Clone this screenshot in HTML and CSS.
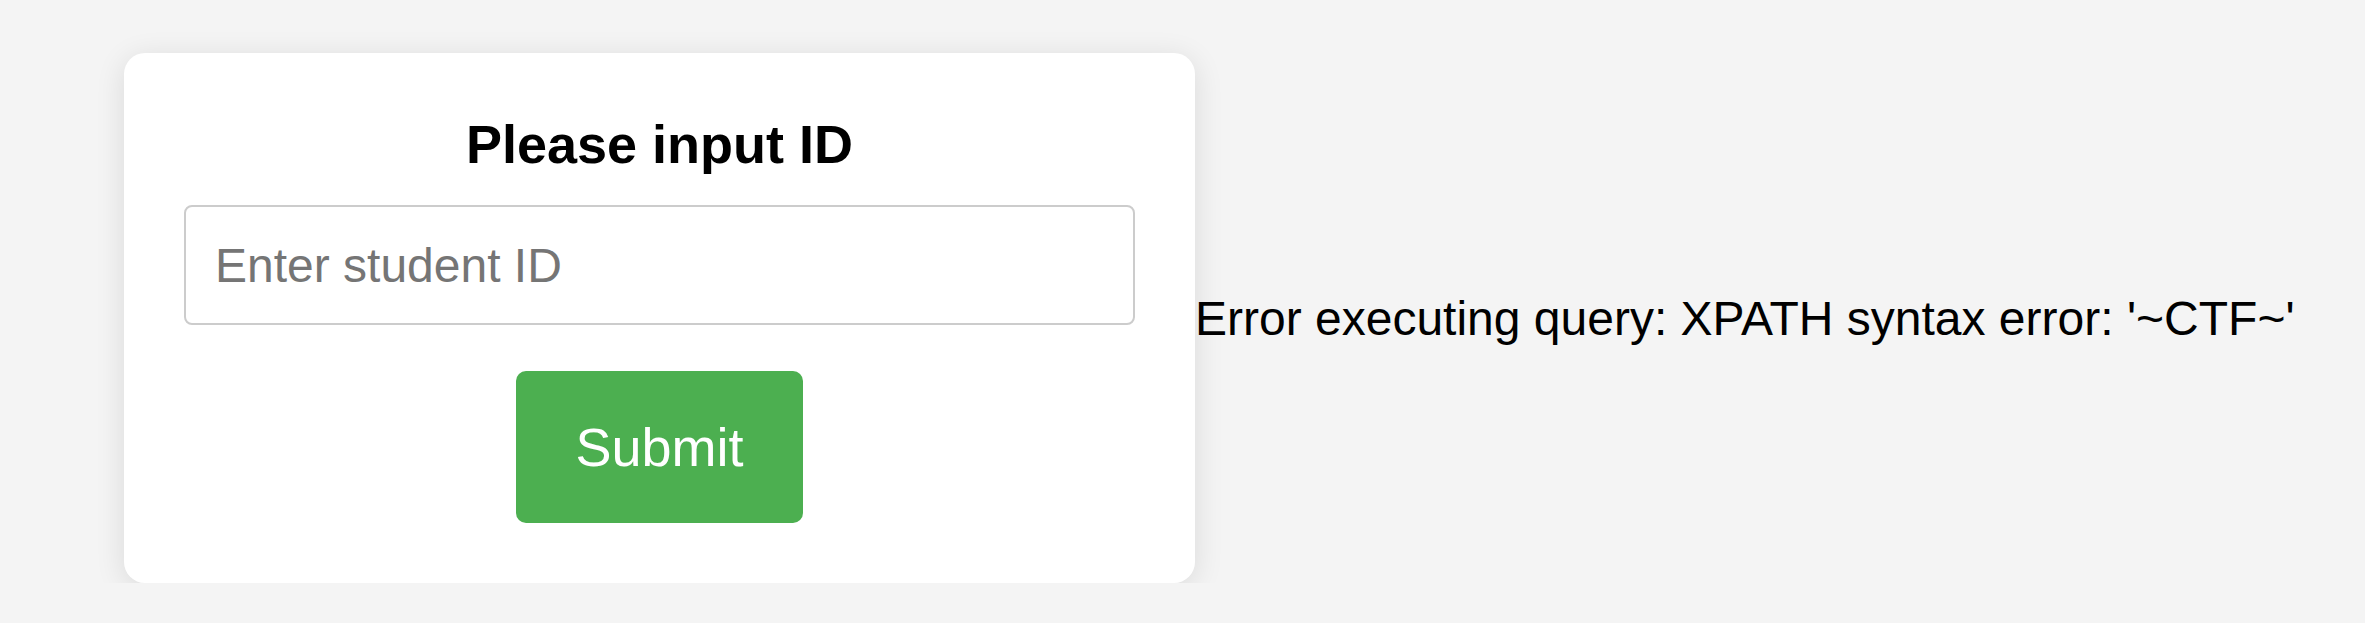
FILE: index.html
```html
<!DOCTYPE html>
<html lang="en">
<head>
<meta charset="utf-8">
<title>Please input ID</title>
<link rel="stylesheet" href="styles.css">
</head>
<body>
<div class="page">
  <form class="card" onsubmit="return false;">
    <h2 class="title">Please input ID</h2>
    <input class="field" type="text" placeholder="Enter student ID">
    <button class="submit" type="submit">Submit</button>
  </form>
  <div class="result">Error executing query: XPATH syntax error: '~CTF~'</div>
</div>
</body>
</html>
```

FILE: styles.css
```css
html, body {
  margin: 0;
  padding: 0;
  background: #f4f4f4;
  font-family: "Liberation Sans", Arial, sans-serif;
}

.page {
  display: flex;
  align-items: center;
  padding: 53px 0 0 124px;
}

.card {
  box-sizing: border-box;
  width: 1071px;
  padding: 60px;
  background: #ffffff;
  border-radius: 21px;
  box-shadow: 0 5px 30px rgba(0, 0, 0, 0.11);
  display: flex;
  flex-direction: column;
  align-items: center;
}

.title {
  margin: 0 0 30px 0;
  font-size: 54px;
  font-weight: bold;
  line-height: normal;
  color: #000;
}

.field {
  box-sizing: border-box;
  width: 100%;
  height: 120px;
  padding: 30px 29px;
  border: 2px solid #cccccc;
  border-radius: 8px;
  font-family: "Liberation Sans", Arial, sans-serif;
  font-size: 48px;
  color: #000;
  background: #fff;
  outline: none;
}

.field::placeholder {
  color: #757575;
}

.submit {
  margin-top: 46px;
  height: 152px;
  padding: 0 59px;
  border: none;
  border-radius: 10px;
  background: #4caf50;
  color: #ffffff;
  font-family: "Liberation Sans", Arial, sans-serif;
  font-size: 54px;
  cursor: pointer;
}

.result {
  font-size: 48px;
  color: #000;
  white-space: nowrap;
}
```
